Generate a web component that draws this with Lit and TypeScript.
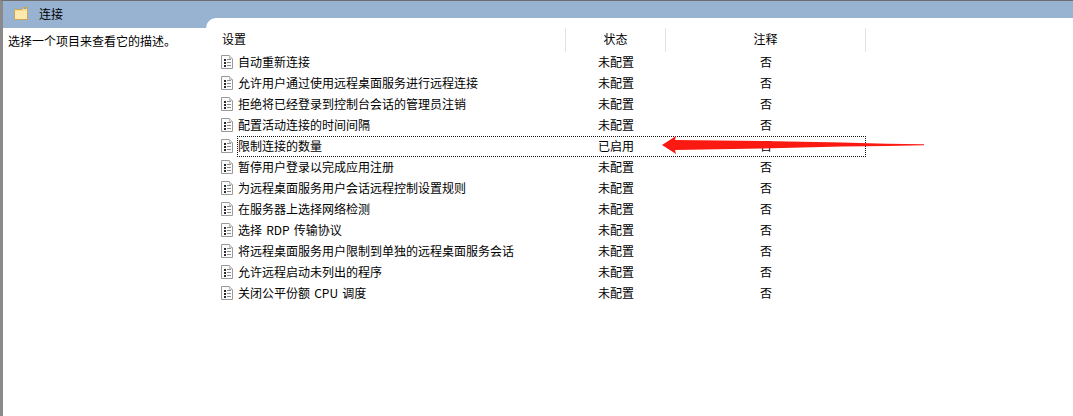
import { LitElement, html, css, svg } from "lit";
import { customElement } from "lit/decorators.js";

const rows: [string, string][] = [
  ["自动重新连接", "未配置"],
  ["允许用户通过使用远程桌面服务进行远程连接", "未配置"],
  ["拒绝将已经登录到控制台会话的管理员注销", "未配置"],
  ["配置活动连接的时间间隔", "未配置"],
  ["限制连接的数量", "已启用"],
  ["暂停用户登录以完成应用注册", "未配置"],
  ["为远程桌面服务用户会话远程控制设置规则", "未配置"],
  ["在服务器上选择网络检测", "未配置"],
  ["选择 RDP 传输协议", "未配置"],
  ["将远程桌面服务用户限制到单独的远程桌面服务会话", "未配置"],
  ["允许远程启动未列出的程序", "未配置"],
  ["关闭公平份额 CPU 调度", "未配置"],
];

const docIcon = html`<svg class="doc" width="14" height="16" viewBox="0 0 14 16">
  <path d="M1.5 1.5H9.5L12.5 4.5V14.5H1.5Z" fill="#fbfbfb" stroke="#9a9a9a"/>
  <path d="M9.5 1.5V4.5H12.5" fill="#e8e8e8" stroke="#bcbcbc"/>
  ${[5, 8, 11].map((y) => svg`<rect x="4" y="${y}" width="2" height="2" fill="#2a2a2a"/><rect x="7" y="${y}" width="4" height="1" fill="#8a8a8a"/>`)}
</svg>`;

@customElement("app-root")
export class AppRoot extends LitElement {
  static styles = css`
    :host {
      display: block;
      width: 1073px;
      height: 416px;
      overflow: hidden;
      background: #fff;
      font-family: "Noto Sans CJK SC", "Liberation Sans", sans-serif;
      font-size: 12px;
      color: #000;
    }
    .frame {
      height: 416px;
      box-sizing: border-box;
      border-top: 1px solid #6d6d6d;
      border-left: 3px solid #8a8a8a;
      display: flex;
      flex-direction: column;
      position: relative;
    }
    .title {
      height: 27px;
      flex: none;
      box-sizing: border-box;
      background: #98b3d1;
      display: flex;
      align-items: center;
      padding: 0 0 2px 10px;
      gap: 10px;
    }
    .body {
      flex: 1;
      display: flex;
      min-height: 0;
    }
    .desc {
      width: 203px;
      flex: none;
      padding: 5px 0 0 5px;
      box-sizing: border-box;
      line-height: 16px;
    }
    .list {
      flex: 1;
      background: #fff;
      margin-top: -10px;
      border-top-left-radius: 10px;
      padding: 10px 0 0 15px;
    }
    .head {
      display: grid;
      grid-template-columns: 345px 100px 200px;
      width: 645px;
      height: 24px;
    }
    .head div {
      line-height: 21px;
      border-right: 1px solid #e3e3e3;
      text-align: center;
      box-sizing: border-box;
    }
    .head div:first-child {
      text-align: left;
      padding-left: 1px;
    }
    .row {
      display: grid;
      grid-template-columns: 345px 100px 200px;
      width: 645px;
      height: 21px;
      box-sizing: border-box;
      padding-bottom: 2px;
      align-items: center;
      position: relative;
    }
    .name {
      display: flex;
      align-items: center;
      gap: 4px;
      white-space: pre;
      word-spacing: 1.5px;
    }
    .doc {
      flex: none;
      margin-left: -1px;
    }
    .status {
      padding-left: 32px;
    }
    .note {
      text-align: center;
    }
    .focus {
      position: absolute;
      left: 16px;
      top: 0;
      width: 629px;
      height: 21px;
      box-sizing: border-box;
      border: 1px dotted #111;
      pointer-events: none;
    }
    .arrow {
      position: absolute;
      left: 659px;
      top: 134px;
      pointer-events: none;
    }
  `;

  render() {
    return html`<div class="frame">
      <div class="title">
        <svg width="16" height="15" viewBox="0 0 16 15">
          <path d="M1.5 3.5H9L10 1.5H14.5V13.5H1.5Z" fill="#f6dd92" stroke="#c8a65e"/>
          <rect x="10.5" y="2" width="3" height="1" fill="#6fa3d8"/>
          <path d="M2 5H14V13H2Z" fill="#fbe9ad"/>
        </svg>
        <span>连接</span>
      </div>
      <div class="body">
        <div class="desc">选择一个项目来查看它的描述。</div>
        <div class="list">
          <div class="head"><div>设置</div><div>状态</div><div>注释</div></div>
          ${rows.map(
            ([n, s], i) => html`<div class="row">
              <div class="name">${docIcon}<span>${n}</span></div>
              <div class="status">${s}</div>
              <div class="note">否</div>
              ${i === 4 ? html`<div class="focus"></div>` : ""}
            </div>`
          )}
        </div>
      </div>
      <svg class="arrow" width="270" height="22" viewBox="0 0 270 22">
        <path d="M0 10L14 1L13 5L100 6L180 7.500L225 8.800L262 9.200L262 10.200L225 11L180 11.500L100 13.500L13 15L14 19Z" fill="#fb1a12"/>
      </svg>
    </div>`;
  }
}
